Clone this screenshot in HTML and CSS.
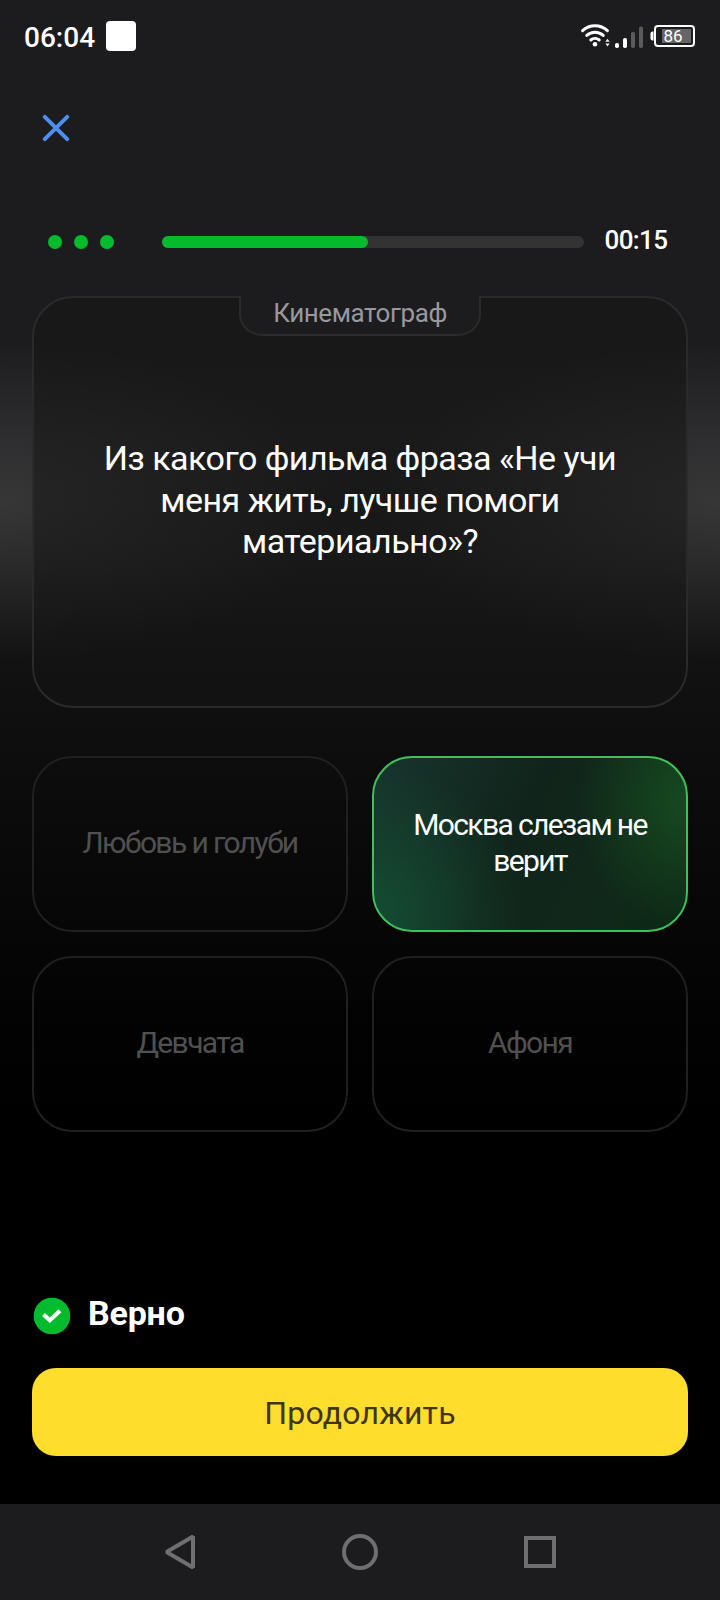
FILE: index.html
```html
<!DOCTYPE html>
<html lang="ru">
<head>
<meta charset="utf-8">
<title>Викторина</title>
<link rel="stylesheet" href="styles.css">
</head>
<body>
<div class="screen">
  <header class="status">
    <span class="clock">06:04</span>
    <span class="app-badge"></span>
    <svg class="indicators" width="116" height="28" viewBox="0 0 116 28">
      <g fill="none" stroke="#fff" stroke-width="3" stroke-linecap="round">
        <path d="M2.6 8.6a18 18 0 0 1 24.8 0"/>
        <path d="M6.8 13.4a12 12 0 0 1 16.4 0"/>
        <path d="M10.8 18a6.5 6.5 0 0 1 8.400 0"/>
      </g>
      <circle cx="15" cy="22.300" r="2.300" fill="#fff"/>
      <path d="M25.300 19.800l2.200-3 2.200 3zM25.300 21.600l2.200 3 2.200-3z" fill="#eee"/>
      <rect x="35" y="21" width="4" height="5" rx="1.800" fill="#fff"/>
      <rect x="43" y="16" width="4" height="10" rx="1.800" fill="#fff"/>
      <rect x="51" y="10" width="4" height="16" rx="1.800" fill="#5b5b5d"/>
      <rect x="59" y="4.500" width="4" height="21.500" rx="1.800" fill="#5b5b5d"/>
      <path d="M73.500 9.500h-1a2 2 0 0 0-2 2v5a2 2 0 0 0 2 2h1z" fill="#fff"/>
      <rect x="75" y="4" width="39" height="20" rx="3" fill="none" stroke="#fff" stroke-width="2"/>
      <rect x="82" y="7" width="29" height="14" fill="#656567"/>
      <text class="battery-level" x="93" y="20">86</text>
    </svg>
  </header>

  <nav class="toolbar">
    <svg width="28" height="28" viewBox="0 0 28 28" fill="none" stroke="#4d8ff0" stroke-width="4" stroke-linecap="round">
      <path d="M2.800 2.800l22.400 22.400M25.200 2.800l-22.400 22.400"/>
    </svg>
  </nav>

  <section class="progress">
    <div class="dots"><i></i><i></i><i></i></div>
    <div class="track"><div class="fill"></div></div>
    <span class="timer">00:15</span>
  </section>

  <section class="card">
    <svg class="card-shape" width="656" height="412" viewBox="0 0 656 412">
      <path d="M41 1H208V18C208 30 218 39 231 39H425C438 39 448 30 448 18V1H615A40 40 0 0 1 655 41V371A40 40 0 0 1 615 411H41A40 40 0 0 1 1 371V41A40 40 0 0 1 41 1Z"/>
    </svg>
    <span class="topic">Кинематограф</span>
    <p class="question">Из какого фильма фраза «Не учи<br>меня жить, лучше помоги<br>материально»?</p>
  </section>

  <section class="answers">
    <div class="answer">Любовь и голуби</div>
    <div class="answer right">Москва слезам не<br>верит</div>
    <div class="answer">Девчата</div>
    <div class="answer">Афоня</div>
  </section>

  <footer class="result">
    <div class="verdict">
      <svg width="40" height="40" viewBox="0 0 40 40">
        <circle cx="20" cy="20" r="18.300" fill="#04bb2d"/>
        <path d="M11.500 18.500L17.800 24.200L28 14.800" fill="none" stroke="#fff" stroke-width="4.200"/>
      </svg>
      <span>Верно</span>
    </div>
    <button class="continue">Продолжить</button>
  </footer>

  <nav class="system-nav">
    <svg width="36" height="40" viewBox="0 0 36 40"><path d="M31 4.500V35.500L4.500 20Z"/></svg>
    <svg width="36" height="40" viewBox="0 0 36 40"><circle cx="18" cy="20" r="16"/></svg>
    <svg width="36" height="40" viewBox="0 0 36 40"><rect x="4" y="6" width="28" height="28"/></svg>
  </nav>
</div>
</body>
</html>
```

FILE: styles.css
```css
* {
  box-sizing: border-box;
}

body {
  margin: 0;
  background: #000;
  font-family: Roboto, "Noto Sans", sans-serif;
}

.screen {
  display: flex;
  flex-direction: column;
  width: 720px;
  height: 1600px;
  color: #fff;
  background:
    radial-gradient(ellipse 340px 160px at 0 502px, rgba(255, 255, 255, .11), rgba(255, 255, 255, .05) 50%, transparent),
    radial-gradient(ellipse 340px 160px at 720px 502px, rgba(255, 255, 255, .11), rgba(255, 255, 255, .05) 50%, transparent),
    linear-gradient(#1c1c1e 0, #1c1c1e 330px, #202022 440px, #1c1c1c 560px, #121212 660px, #0e0e0e 740px, #080808 880px, #020202 1040px, #000 1130px);
}

.status {
  display: flex;
  align-items: center;
  height: 72px;
  padding: 0 24px;
}

.clock {
  width: 82px;
  font-size: 28px;
  font-weight: 500;
  line-height: 32px;
  padding-top: 3px;
}

.app-badge {
  width: 30px;
  height: 30px;
  border-radius: 4px;
  background: #fff;
}

.indicators {
  margin-left: auto;
}

.battery-level {
  fill: #fff;
  font-size: 17px;
  text-anchor: middle;
}

.toolbar {
  height: 140px;
  padding: 42px 42px 0;
}

.toolbar svg,
.system-nav svg {
  display: block;
}

.progress {
  display: flex;
  align-items: center;
  height: 60px;
  padding: 0 48px;
}

.dots {
  display: flex;
  gap: 12px;
  width: 114px;
}

.dots i {
  width: 14px;
  height: 14px;
  border-radius: 50%;
  background: #04bb2d;
}

.track {
  width: 422px;
  height: 12px;
  border-radius: 6px;
  background: #333;
}

.fill {
  width: 206px;
  height: 12px;
  border-radius: 6px;
  background: #04bb2d;
}

.timer {
  margin-left: 20.500px;
  padding-bottom: 4px;
  font-size: 26px;
  font-weight: 500;
  letter-spacing: -.6px;
  line-height: 30px;
}

.card {
  position: relative;
  display: flex;
  flex-direction: column;
  align-items: center;
  height: 412px;
  margin: 24px 32px 0;
}

.card-shape {
  position: absolute;
  inset: 0;
}

.card-shape path {
  fill: rgba(20, 20, 20, .5);
  stroke: #2a2a2a;
  stroke-width: 2;
}

.topic {
  position: relative;
  height: 36px;
  color: #98989f;
  font-size: 26px;
  letter-spacing: -.42px;
  line-height: 34px;
}

.question {
  position: relative;
  margin: 106px 0 0;
  font-size: 34px;
  letter-spacing: -.52px;
  line-height: 41.500px;
  text-align: center;
  white-space: nowrap;
}

.answers {
  display: grid;
  grid-template-columns: 1fr 1fr;
  grid-auto-rows: 176px;
  gap: 24px;
  margin: 48px 32px 0;
}

.answer {
  display: flex;
  align-items: center;
  justify-content: center;
  padding-bottom: 2px;
  border: 2px solid #202020;
  border-radius: 40px;
  color: #505050;
  font-size: 30px;
  letter-spacing: -1.620px;
  line-height: 36px;
  text-align: center;
}

.answer.right {
  border-color: #3fc05a;
  color: #fff;
  background:
    radial-gradient(ellipse 150px 150px at 0 90%, #144c32, transparent),
    radial-gradient(ellipse 110px 130px at 100% 25%, #164a20, transparent),
    linear-gradient(115deg, #17352e, #11241b 45%, #10281a 75%, #0c2814);
}

.result {
  display: flex;
  flex-direction: column;
  margin: 164px 32px 0;
}

.verdict {
  display: flex;
  align-items: center;
  gap: 16px;
  height: 40px;
  font-size: 34px;
  font-weight: 700;
  letter-spacing: -.2px;
}

.verdict span {
  padding-bottom: 6px;
}

.continue {
  height: 88px;
  margin-top: 32px;
  padding: 2px 0 0;
  border: 0;
  border-radius: 24px;
  color: #3d350e;
  background: #ffdd2d;
  font: 400 32px/36px Roboto, "Noto Sans", sans-serif;
  letter-spacing: .200px;
}

.system-nav {
  display: flex;
  align-items: center;
  justify-content: space-between;
  height: 96px;
  margin-top: auto;
  padding: 0 162px;
  background: #1c1c1e;
}

.system-nav path,
.system-nav circle,
.system-nav rect {
  fill: none;
  stroke: #6f6f70;
  stroke-width: 4;
}

.system-nav path {
  stroke-linejoin: bevel;
}
```
